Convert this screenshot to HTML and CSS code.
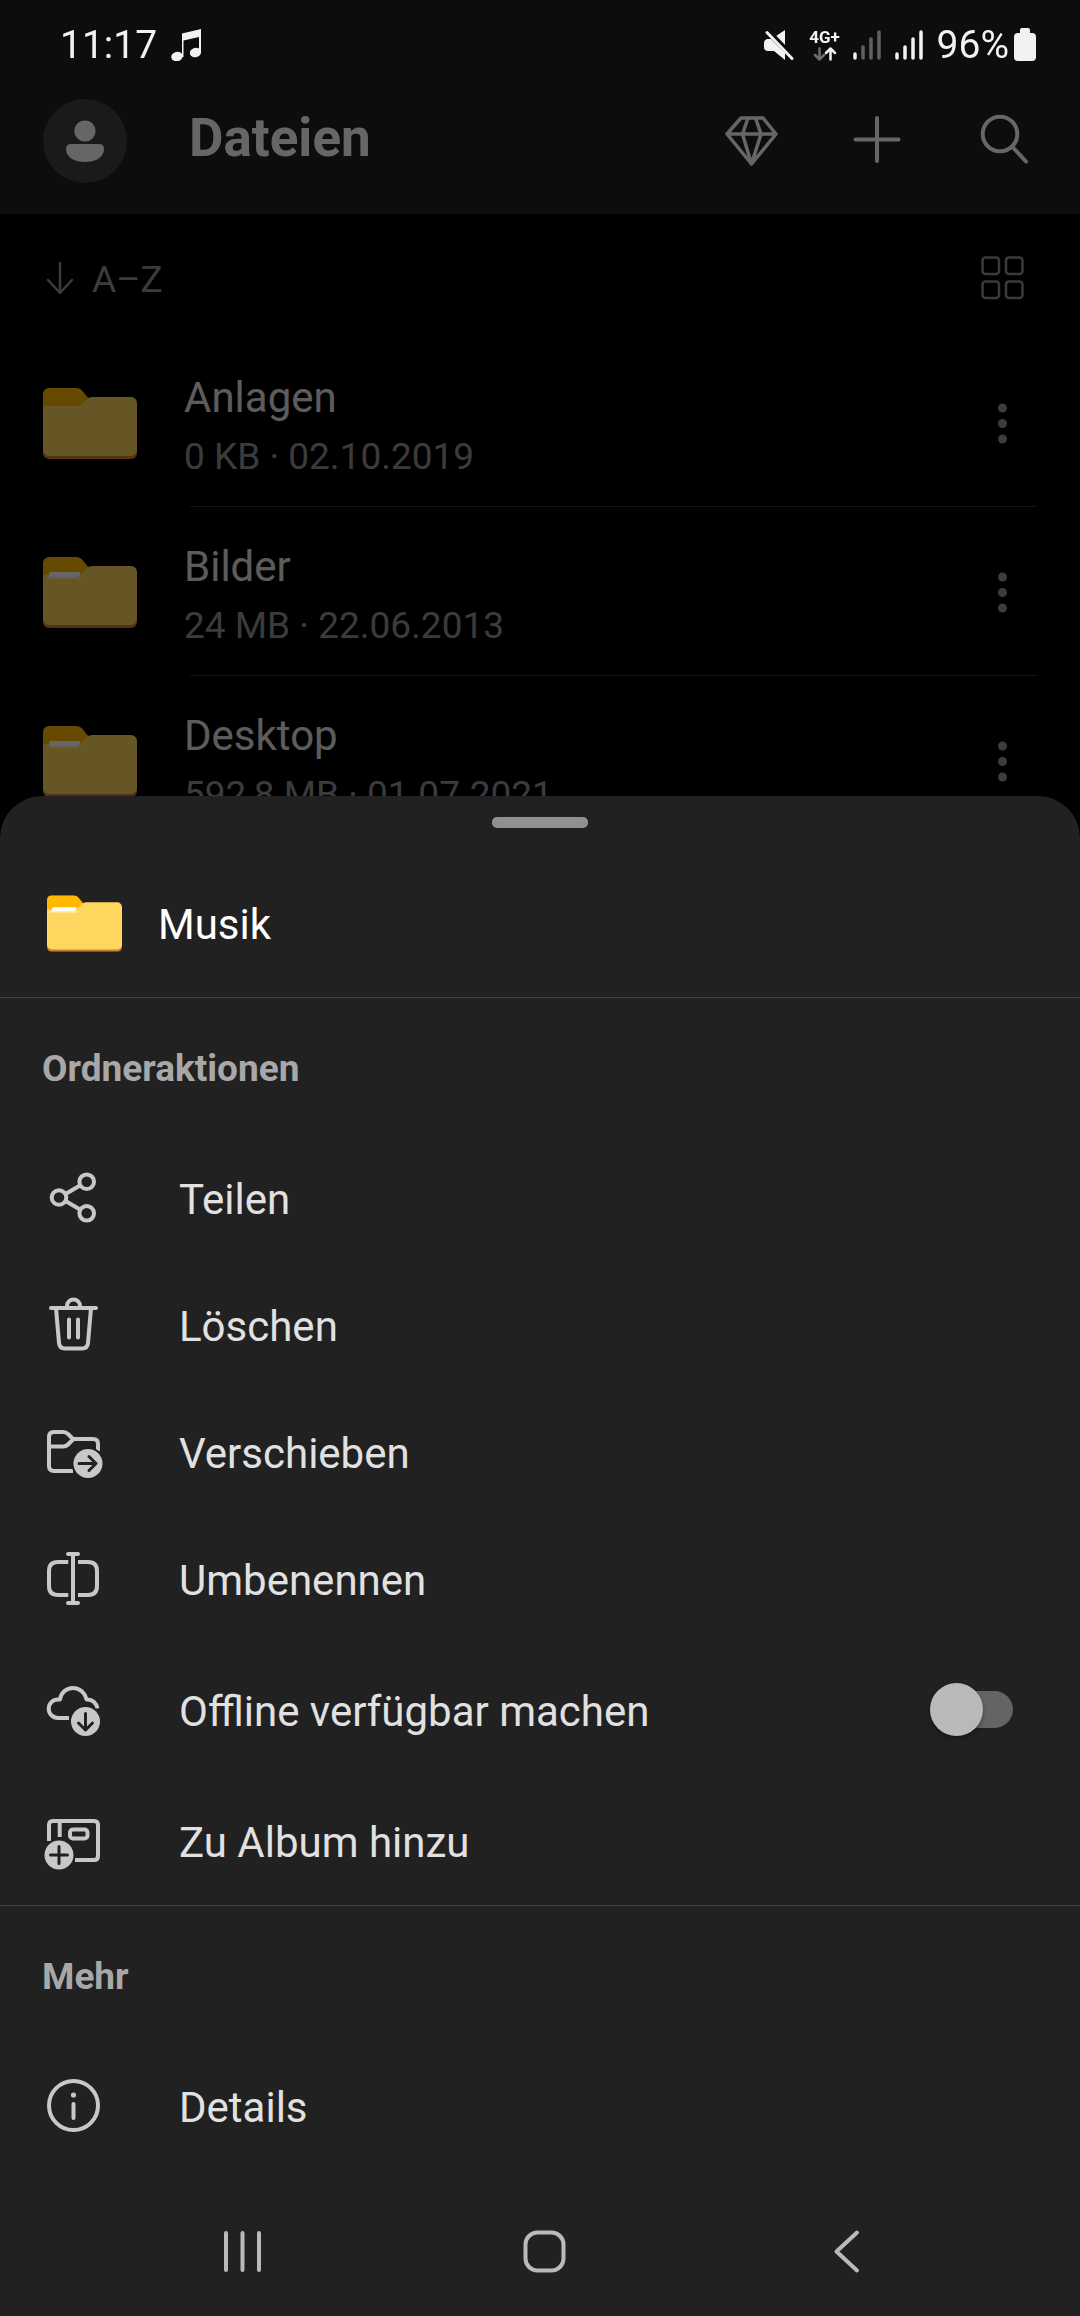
FILE: index.html
```html
<!DOCTYPE html>
<html lang="de">
<head>
<meta charset="utf-8">
<meta name="viewport" content="width=device-width, initial-scale=1">
<title>Dateien</title>
<link rel="stylesheet" href="styles.css">
</head>
<body>
<svg class="defs" aria-hidden="true">
  <defs>
    <linearGradient id="tab" x1="0" y1="0" x2="0" y2="1">
      <stop offset="0" stop-color="#ffb900"/><stop offset="1" stop-color="#ffb400"/>
    </linearGradient>
    <symbol id="folder-empty" viewBox="0 0 94 71">
      <path fill="url(#tab)" d="M0 6a6 6 0 0 1 6-6h27q4 0 6.500 3L46 11 40 24H0z"/>
      <path fill="#cc7f33" d="M0 60h94v5a6 6 0 0 1-6 6H6a6 6 0 0 1-6-6z"/>
      <path fill="#ffd75e" d="M0 18h34q3 0 5-2l5-5q2-2 5-2h39a6 6 0 0 1 6 6v47a6 6 0 0 1-6 6H6a6 6 0 0 1-6-6z"/>
    </symbol>
    <symbol id="folder-full" viewBox="0 0 94 71">
      <use href="#folder-empty"/>
      <path fill="#ffe9a6" d="M3 20h35v2H3z"/>
      <path fill="#fff" d="M8 15h28q2 0 1 2-1 3-4 3H6v-3q0-2 2-2z"/>
    </symbol>
    <symbol id="more" viewBox="0 0 63 63">
      <g fill="#969696" stroke="none"><circle cx="31.500" cy="16" r="4.500"/><circle cx="31.500" cy="31.500" r="4.500"/><circle cx="31.500" cy="47" r="4.500"/></g>
    </symbol>
  </defs>
</svg>

<div class="status">
  <div class="status-group">
    <span>11:17</span>
    <svg class="note" viewBox="0 0 32 32" role="img" aria-label="Musik">
      <path fill="currentColor" d="M11 4.500 30 0v24h-2V8L12.500 11.500V28H11z"/>
      <ellipse fill="currentColor" cx="6" cy="27.500" rx="5.800" ry="4.700" transform="rotate(-15 6 27.500)"/>
      <ellipse fill="currentColor" cx="24.500" cy="23.500" rx="5.700" ry="4.700" transform="rotate(-15 24.500 23.500)"/>
    </svg>
  </div>
  <div class="status-group status-right">
    <svg class="mute" viewBox="0 0 30 32" aria-hidden="true">
      <path fill="currentColor" d="M21 1v15L12 7zM3 10h4l14 14v7L10 22H4q-4 0-4-4v-4q0-3 3-4z"/>
      <path stroke="#0d0d0d" stroke-width="2" d="M5 .500 29.500 27"/>
      <path stroke="currentColor" stroke-width="3" stroke-linecap="round" d="M3 3.500 28 29.500"/>
    </svg>
    <div class="network">
      <span>4G+</span>
      <svg viewBox="0 0 24 14" fill="none" stroke-width="2.500" stroke-linecap="round" stroke-linejoin="round" aria-hidden="true">
        <path stroke="#6e6e6e" d="M6.500 1.500v11M2 8l4.500 4.500L11 8"/>
        <path stroke="#f2f2f2" d="M17.500 12.500v-11M13 6l4.500-4.500L22 6"/>
      </svg>
    </div>
    <svg class="signal" viewBox="0 0 28 30" stroke-width="3.500" stroke-linecap="round" aria-hidden="true">
      <path stroke="#f2f2f2" d="M2 24v4"/><path stroke="#606060" d="M10 17v11M18 9v19M26 2v26"/>
    </svg>
    <svg class="signal signal-two" viewBox="0 0 28 30" stroke="#f2f2f2" stroke-width="3.500" stroke-linecap="round" aria-hidden="true">
      <path d="M2 24v4M10 17v11M18 9v19M26 2v26"/>
    </svg>
    <span>96%</span>
    <svg class="battery" viewBox="0 0 22 33" aria-hidden="true">
      <path fill="currentColor" d="M6 5V2q0-2 2-2h6q2 0 2 2v3h2q4 0 4 4v20q0 4-4 4H4q-4 0-4-4V9q0-4 4-4z"/>
    </svg>
  </div>
</div>

<div class="app">
  <header class="topbar">
    <button class="avatar" aria-label="Konto">
      <svg viewBox="0 0 84 84" fill="currentColor" aria-hidden="true"><circle cx="42" cy="32" r="10.600"/><path d="M28 45h28q5 0 5 5 0 6-6 10-5 3-13 3t-13-3q-6-4-6-10 0-5 5-5z"/></svg>
    </button>
    <h1>Dateien</h1>
    <div class="tools">
      <button aria-label="Premium"><svg class="icon" viewBox="0 0 63 63" stroke-width="3.500"><path d="M21 9h22l13 16-24.500 30L7 25zM7 25h49M28 9l-5.500 16L31.500 55 41 25 35.500 9"/></svg></button>
      <button aria-label="Hinzufügen"><svg class="icon" viewBox="0 0 63 63" stroke-width="4"><path d="M31 9v43M9.500 30.500h43"/></svg></button>
      <button aria-label="Suchen"><svg class="icon" viewBox="0 0 63 63" stroke-width="4"><circle cx="28" cy="25" r="17.300"/><path d="m40.500 38 13.500 14.500"/></svg></button>
    </div>
  </header>

  <main>
    <div class="sortbar">
      <button class="sort"><svg viewBox="0 0 36 34" class="arrow" stroke-width="2.500" aria-hidden="true"><path d="M18 1v30M6 18l12 13 12-13"/></svg>A–Z</button>
      <button aria-label="Rasteransicht"><svg class="icon" viewBox="0 0 63 63" stroke-width="2.500"><rect x="11.500" y="11.500" width="16.500" height="16.500" rx="3"/><rect x="35" y="11.500" width="16.500" height="16.500" rx="3"/><rect x="11.500" y="35.500" width="16.500" height="16.500" rx="3"/><rect x="35" y="35.500" width="16.500" height="16.500" rx="3"/></svg></button>
    </div>
    <ul class="files">
      <li>
        <svg class="folder" aria-hidden="true"><use href="#folder-empty"/></svg>
        <div class="file-text"><h2>Anlagen</h2><p>0 KB · 02.10.2019</p></div>
        <button aria-label="Mehr zu Anlagen"><svg class="icon"><use href="#more"/></svg></button>
      </li>
      <li>
        <svg class="folder" aria-hidden="true"><use href="#folder-full"/></svg>
        <div class="file-text"><h2>Bilder</h2><p>24 MB · 22.06.2013</p></div>
        <button aria-label="Mehr zu Bilder"><svg class="icon"><use href="#more"/></svg></button>
      </li>
      <li>
        <svg class="folder" aria-hidden="true"><use href="#folder-full"/></svg>
        <div class="file-text"><h2>Desktop</h2><p>592,8 MB · 01.07.2021</p></div>
        <button aria-label="Mehr zu Desktop"><svg class="icon"><use href="#more"/></svg></button>
      </li>
    </ul>
  </main>
</div>

<div class="scrim"></div>

<section class="sheet" role="dialog" aria-labelledby="sheet-title">
  <div class="handle"></div>
  <div class="sheet-head">
    <svg class="folder-small" aria-hidden="true"><use href="#folder-full"/></svg>
    <h2 id="sheet-title">Musik</h2>
  </div>

  <section class="group">
    <h3>Ordneraktionen</h3>
    <button class="action">
      <svg class="icon" viewBox="0 0 63 63" stroke-width="4"><circle cx="44.700" cy="15.700" r="7.300"/><circle cx="17" cy="31.500" r="7.300"/><circle cx="44.700" cy="47.300" r="7.300"/><path d="m23.500 28 14.500-8.500M23.500 35 38 43.500"/></svg>
      <span>Teilen</span>
    </button>
    <button class="action">
      <svg class="icon" viewBox="0 0 63 63" stroke-width="4"><path d="M9 15h45M25 15v-2a6.500 6.500 0 0 1 13 0v2M14 15l3 35q.500 5.500 6 5.500h17q5.500 0 6-5.500l3-35M27 26.500v18M36 26.500v18"/></svg>
      <span>Löschen</span>
    </button>
    <button class="action">
      <svg class="icon" viewBox="0 0 63 63" stroke-width="4"><path stroke-linecap="butt" d="M56 31v-7q0-5-5-5H31l-5-5q-2-2-5-2h-9q-5 0-5 5v29q0 5 5 5h19M7 26.500h14q3 0 5-2l5-5"/><circle class="badge" cx="46" cy="43.500" r="14.500"/><path class="cut" d="M37 43.500h17M47 36.500l7 7-7 7"/></svg>
      <span>Verschieben</span>
    </button>
    <button class="action">
      <svg class="icon" viewBox="0 0 63 63" stroke-width="4"><path d="M31 7v49M26 7h10M26 56h10"/><path stroke-linecap="butt" d="M26.300 15H16q-9 0-9 9v15q0 9 9 9h10.300M36 15h10q9 0 9 9v15q0 9-9 9H36"/></svg>
      <span>Umbenennen</span>
    </button>
    <label class="action action-switch">
      <svg class="icon" viewBox="0 0 63 63" stroke-width="4" aria-hidden="true"><path stroke-linecap="butt" d="M27 40H16a9.300 9.300 0 0 1 0-18.600h2C19 15 24 10 31 10s12 5 13.500 11.400h1c5 0 9 4 10 9"/><circle class="badge" cx="43.500" cy="43.500" r="14.500"/><path class="cut" d="M43.500 35.500V52M36.500 45l7 7 7-7"/></svg>
      <span>Offline verfügbar machen</span>
      <input class="switch" type="checkbox" role="switch">
    </label>
    <button class="action">
      <svg class="icon" viewBox="0 0 63 63" stroke-width="4"><path stroke-linecap="butt" d="M7 32V16q0-4 4-4h41q4 0 4 4v31q0 4-4 4H33M17.700 12v16"/><rect x="28" y="20.500" width="17.500" height="9" rx="3"/><circle class="badge" cx="17" cy="46" r="14.500"/><path class="cut" d="M17 37.500v17M8.500 46h17"/></svg>
      <span>Zu Album hinzu</span>
    </button>
  </section>

  <section class="group group-more">
    <h3>Mehr</h3>
    <button class="action">
      <svg class="icon" viewBox="0 0 63 63" stroke-width="4"><circle cx="31.500" cy="31.500" r="24.500"/><path d="M31.500 30v14"/><circle cx="31.500" cy="21" r="2.600" fill="currentColor" stroke="none"/></svg>
      <span>Details</span>
    </button>
  </section>

  <nav class="navbar">
    <button aria-label="Letzte Apps"><svg class="icon" viewBox="0 0 63 63" stroke-width="4"><path d="M15 13v37M31.500 13v37M48 13v37"/></svg></button>
    <button aria-label="Startseite"><svg class="icon" viewBox="0 0 63 63" stroke-width="4"><rect x="12.500" y="12.500" width="38" height="38" rx="12"/></svg></button>
    <button aria-label="Zurück"><svg class="icon" viewBox="0 0 63 63" stroke-width="4"><path d="M42 12.500 21.500 31.500 42 50.500"/></svg></button>
  </nav>
</section>
</body>
</html>
```
FILE: styles.css
```css
* {
  box-sizing: border-box;
}

body {
  margin: 0;
  min-height: 100vh;
  background: #000;
  color: #fff;
  font-family: Roboto, "Noto Sans", sans-serif;
  font-size: 42px;
}

h1, h2, h3, p, ul {
  margin: 0;
  padding: 0;
  font-weight: 400;
}

ul {
  list-style: none;
}

button {
  display: flex;
  align-items: center;
  padding: 0;
  border: 0;
  background: none;
  color: inherit;
  font: inherit;
  text-align: left;
}

svg {
  display: block;
  flex: none;
}

.defs {
  position: absolute;
  width: 0;
  height: 0;
}

.icon,
.arrow {
  fill: none;
  stroke: currentColor;
  stroke-linecap: round;
  stroke-linejoin: round;
}

.icon {
  width: 63px;
  height: 63px;
}

.arrow {
  width: 36px;
  height: 34px;
}

/* Status bar stays above the scrim */
.status {
  position: relative;
  z-index: 2;
  display: flex;
  justify-content: space-between;
  height: 67px;
  padding: 22px 44px 0 60px;
  background: #0d0d0d;
  color: #f2f2f2;
  font-size: 39px;
  line-height: 44px;
}

.status-group {
  display: flex;
  align-items: center;
}

.note {
  width: 32px;
  height: 32px;
  margin-left: 14px;
}

.mute {
  width: 30px;
  height: 32px;
}

.network {
  display: grid;
  justify-items: center;
  gap: 2px;
  width: 32px;
  margin: 0 12px 0 15px;
  font-size: 17px;
  font-weight: 700;
  line-height: 16px;
}

.network svg {
  width: 24px;
  height: 14px;
}

.signal {
  width: 28px;
  height: 30px;
}

.signal-two {
  margin: 0 14px;
}

.battery {
  width: 22px;
  height: 33px;
  margin-left: 5px;
}

.topbar {
  display: flex;
  align-items: center;
  height: 147px;
  padding: 0 45px 0 43px;
  background: #212121;
}

.avatar {
  width: 84px;
  height: 84px;
  border-radius: 50%;
  background: #424242;
}

.topbar h1 {
  margin-left: 62px;
  padding-bottom: 6px;
  font-size: 53px;
  font-weight: 700;
}

.tools {
  display: flex;
  gap: 63px;
  margin-left: auto;
}

.sortbar {
  display: flex;
  align-items: center;
  justify-content: space-between;
  height: 124px;
  padding: 2px 46px 0 42px;
  color: #949494;
  font-size: 37px;
}

.sort {
  gap: 14px;
  padding-top: 4px;
}

.files li {
  display: grid;
  grid-template-columns: 141px 1fr auto;
  grid-template-rows: 165px 1px;
  align-items: center;
  padding: 3px 46px 0 43px;
}

.files li::after {
  grid-column: 1 / -1;
  height: 1px;
  margin: 0 -3px 0 147px;
  background: #333;
  content: "";
}

.folder {
  width: 94px;
  height: 71px;
}

.file-text {
  padding-top: 11px;
}

.file-text h2 {
  color: #e6e6e6;
  font-size: 42px;
  line-height: 56px;
}

.file-text p {
  color: #949494;
  font-size: 37px;
  line-height: 62px;
}

.scrim {
  position: fixed;
  z-index: 1;
  inset: 0;
  background: rgba(0, 0, 0, 0.6);
}

.sheet {
  position: fixed;
  z-index: 3;
  right: 0;
  bottom: 0;
  left: 0;
  padding-top: 21px;
  border-radius: 42px 42px 0 0;
  background: #212121;
}

.handle {
  width: 96px;
  height: 11px;
  margin: 0 auto;
  border-radius: 5px;
  background: #919191;
}

.sheet-head {
  display: flex;
  align-items: center;
  gap: 36px;
  height: 170px;
  padding: 21px 47px 0;
  border-bottom: 1px solid #444;
}

.sheet-head h2 {
  padding-top: 3px;
  font-size: 42px;
}

.folder-small {
  width: 75px;
  height: 57px;
}

.group {
  padding-bottom: 1px;
}

.group h3 {
  height: 136px;
  padding: 5px 42px 0;
  color: #a8a8a8;
  font-size: 37px;
  font-weight: 700;
  line-height: 132px;
}

.group-more {
  padding-bottom: 17px;
  border-top: 1px solid #444;
}

.action {
  display: flex;
  align-items: center;
  gap: 74px;
  width: 100%;
  height: 127px;
  padding: 0 67px 0 42px;
  color: #c8c8c8;
}

.action span {
  padding-top: 4px;
  color: #e1e1e1;
}

.action-switch {
  height: 135px;
}

.badge {
  fill: currentColor;
  stroke: #212121;
  stroke-width: 4;
  paint-order: stroke;
}

.cut {
  stroke: #212121;
  stroke-width: 3;
}

.switch {
  display: grid;
  align-items: center;
  width: 83px;
  height: 53px;
  margin: 0 0 0 auto;
  appearance: none;
}

.switch::before,
.switch::after {
  grid-area: 1 / 1;
  content: "";
}

.switch::before {
  height: 37px;
  margin-left: 6px;
  border-radius: 19px;
  background: #646464;
}

.switch::after {
  width: 53px;
  height: 53px;
  border-radius: 50%;
  background: #b9b9b9;
  box-shadow: 0 2px 4px rgba(0, 0, 0, 0.4);
}

.switch:checked::after {
  justify-self: end;
}

.navbar {
  display: grid;
  grid-template-columns: repeat(3, 1fr);
  height: 130px;
  padding: 0 82px 0 91px;
  color: #bababa;
}

.navbar button {
  justify-content: center;
}
```
